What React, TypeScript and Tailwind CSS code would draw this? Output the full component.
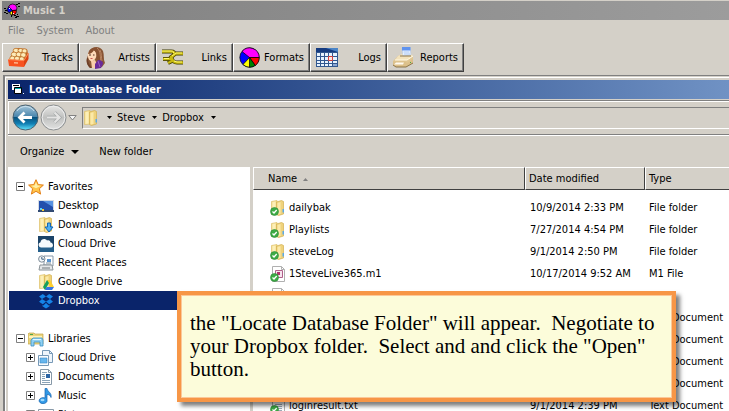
import type { ReactNode } from 'react';

type IconProps = { className?: string };

const AppIcon = () => (
  <svg width="16" height="16" viewBox="0 0 16 16" aria-hidden="true">
    <path d="M8.500 7.500L4.500 4 6 1.800 8.500 1l3 .8 1.500 3-.5 2.200z" fill="#f0f" stroke="#000" strokeWidth=".7" />
    <path d="M8.500 7.500L4.500 4 3.200 6.500l.8 2.500 2 .5z" fill="#00f" stroke="#000" strokeWidth=".7" />
    <path d="M8.500 7.500L6 9.500l.5 2 2.300.5z" fill="#ff0" stroke="#000" strokeWidth=".7" />
    <path d="M8.500 7.500h4l-.5 2.500-1.500 1.500-2 .5z" fill="red" stroke="#000" strokeWidth=".7" />
    <path d="M0 5h2v1H0zM1 7h2v1H1zM0 9h2v1H0zM2 10h2v1H2zM12 1h2v1h-2zM14 0h2v1h-2zM14 3h2v1h-2zM10 12h2v1h-2zM12 13h3v1h-3zM11 14h2v1h-2zM7 12h1v2H7zM13 11h1v1h-1z" fill="#000" />
    <path d="M5 5h1v1H5zM9 10h1v1H9z" fill="#fff" />
  </svg>
);

const TracksIcon = () => (
  <svg width="21" height="21" viewBox="0 0 21 21" aria-hidden="true">
    <path d="M1 13L6 2l4-1 9 1 1 5-4 12z" fill="#c26422" />
    <g fill="#fdebb9" stroke="#b8691d" strokeWidth=".7">
      <ellipse cx="8" cy="3.500" rx="2.800" ry="2.200" />
      <ellipse cx="12.500" cy="3.500" rx="2.500" ry="2" />
      <ellipse cx="16.500" cy="4" rx="2.500" ry="2.200" />
      <ellipse cx="6" cy="7.500" rx="2.800" ry="2.400" />
      <ellipse cx="10.700" cy="7.500" rx="2.600" ry="2.400" />
      <ellipse cx="15.300" cy="8" rx="2.700" ry="2.400" />
      <ellipse cx="4.300" cy="11.300" rx="2.500" ry="2.200" />
      <ellipse cx="9" cy="11.500" rx="2.600" ry="2.300" />
      <ellipse cx="13.700" cy="12" rx="2.500" ry="2.200" />
    </g>
    <path d="M0 12.500l16 1V20L1 19z" fill="#f8521f" />
    <path d="M16 13.500L20.500 6v6L16 20z" fill="#dd4311" />
    <path d="M6 15l4 .3v1.500l-4-.3z" fill="#ffb48a" />
    <path d="M0 12.500l16 1L20.500 6" stroke="#ff8c58" fill="none" />
  </svg>
);

const ArtistsIcon = () => (
  <svg width="21" height="23" viewBox="0 0 21 23" aria-hidden="true">
    <path d="M4 6C6 0 15-1 18 5c1.500 4 0 8 2 12l-3 4-12 1c-3-3-4-7-3-10z" fill="#8a5837" />
    <path d="M3 7c1-3 6-4 8-1 1.500 4-1 9-4 9.500C4 15 2 11 3 7z" fill="#fdd9b8" />
    <path d="M2 12c-1 4 0 7 3 10h2c-3-3-4-6-4-10z" fill="#6e4027" />
    <path d="M3 8c3 0 5-2 6-4 3 3 3 7 3 11l5 3c2-4 1-9 0-12-3-6-11-5-13-1z" fill="#875131" />
    <path d="M12 2c4 3 3 9 4 14M15 4c2 4 1 7 2 11" stroke="#b98561" fill="none" />
    <path d="M6 15l4-1 2 4-1 4H7z" fill="#f8cdaa" />
    <path d="M10 18l3-4c3 0 5 1 5 4l-2 4-6 1z" fill="#6a2b99" />
    <path d="M13 15l2 6" stroke="#9a5dc0" />
    <path d="M4 9h2M8 9h1.500" stroke="#503020" />
    <path d="M5.500 12.500h2" stroke="#cf5555" />
  </svg>
);

const LinksIcon = () => (
  <svg width="22" height="17" viewBox="0 0 22 17" aria-hidden="true" fill="none">
    <path d="M0 2.500h9c3 0 4 1 3 3L8 10H1M21 4.500h-7L9 8c1 3 3 5.500 6 5.500h6M6 14l6-3" stroke="#3d3800" strokeWidth="3.800" />
    <path d="M0 2.500h9c3 0 4 1 3 3L8 10H1M21 4.500h-7L9 8c1 3 3 5.500 6 5.500h6M6 14l6-3" stroke="#c9bb10" strokeWidth="2.400" />
    <path d="M0 2h9c2 0 3 .5 2.500 2M2 9.500h5M20 4h-6L10 7M12 12l3 1h5" stroke="#fff873" strokeWidth="1" />
  </svg>
);

const FormatsIcon = () => (
  <svg width="21" height="21" viewBox="0 0 21 21" aria-hidden="true" stroke="#000" strokeWidth=".7">
    <circle cx="10.500" cy="10.500" r="9.700" fill="#00f" />
    <path d="M10.500 10.500L3 4.500A9.700 9.700 0 0 1 20.200 10.500z" fill="#f0f" />
    <path d="M10.500 10.500h9.700a9.700 9.700 0 0 1-4 8z" fill="red" />
    <path d="M10.500 10.500l5.700 8a9.700 9.700 0 0 1-5.700 1.700z" fill="#008000" />
    <path d="M10.500 10.500v9.700a9.700 9.700 0 0 1-6.500-2.700z" fill="#ff0" />
  </svg>
);

const LogsIcon = () => (
  <svg width="22" height="19" viewBox="0 0 22 19" aria-hidden="true">
    <path d="M0 0h22v19H0z" fill="#31578f" />
    <path d="M0 0h22v4H0z" fill="#153b80" />
    <path d="M10 0h12v4z" fill="#4c85c7" />
    <path
      d="M1 5h3v3H1zM5 5h3v3H5zM9 5h3v3H9zM13 5h3v3h-3zM17 5h4v3h-4zM1 9h3v3H1zM5 9h3v3H5zM9 9h3v3H9zM13 9h3v3h-3zM17 9h4v3h-4zM1 13h3v2H1zM5 13h3v2H5zM9 13h3v2H9zM13 13h3v2h-3zM17 13h4v2h-4zM1 16h3v2H1zM5 16h3v2H5zM9 16h3v2H9zM13 16h3v2h-3z"
      fill="#e8f3ff"
    />
    <path d="M17 16h4v2h-4z" fill="#8ea8d2" />
    <path d="M12.500 8.500h4v4h-4z" fill="#ffe6e1" stroke="#d6403a" />
  </svg>
);

const ReportsIcon = () => (
  <svg width="21" height="21" viewBox="0 0 21 21" aria-hidden="true">
    <path d="M5 9l4-2h9l2 3v6l-7 4H3l-3-3v-3z" fill="#e0c692" />
    <path d="M5 9l4-2h9l2 2-6 4H2z" fill="#f3e2bb" />
    <path d="M9 1h8l1 7-8 1z" fill="#f0f6ff" stroke="#b2c6e4" strokeWidth=".6" />
    <path d="M9 0h8.500v3.500H9z" fill="#5f93ef" />
    <path d="M10.500 5h6M11 7h6" stroke="#a5c3f2" />
    <path d="M7 9h11" stroke="#8f7748" />
    <path d="M2 13h12l6-4" stroke="#fff8e3" fill="none" />
    <path d="M0 14.500h12l2 1.500 6-4v4l-7 4H3l-3-2z" fill="#dcc08a" />
    <path d="M3 15.500h8l-1 2H1z" fill="#fffaf0" />
    <path d="M0 18l3 2h10l7-4" stroke="#8c7549" fill="none" />
    <path d="M17 15h1v1h-1z" fill="#4aa54a" />
  </svg>
);

const WindowIcon = () => (
  <svg width="13" height="11" viewBox="0 0 13 11" aria-hidden="true">
    <path d="M0 0h8v6H0z" fill="#fff" />
    <path d="M1 1h6v1H1z" fill="#000" />
    <path d="M2.500 3.500h7v6h-7z" fill="#fff" stroke="#000" />
    <path d="M3 4h6v1H3z" fill="#0aa" />
    <path d="M11 9h1v1h-1z" fill="#fff" />
  </svg>
);

const BackIcon = () => (
  <svg width="27" height="27" viewBox="0 0 27 27" aria-hidden="true">
    <defs>
      <linearGradient id="back" x1="0" y1="0" x2="0" y2="1">
        <stop offset="0" stopColor="#a7c8dc" />
        <stop offset=".46" stopColor="#4a86ad" />
        <stop offset=".5" stopColor="#09537f" />
        <stop offset=".75" stopColor="#1180b4" />
        <stop offset="1" stopColor="#65e6ff" />
      </linearGradient>
    </defs>
    <circle cx="13.500" cy="13.500" r="12.500" fill="url(#back)" stroke="#49606f" />
    <path d="M5 7c4-6 13-6 17 0" stroke="#e1eef5" fill="none" opacity=".7" />
    <path d="M20 13.500H8.500M12.500 8.500l-5 5 5 5" stroke="#fff" strokeWidth="2.800" fill="none" />
  </svg>
);

const ForwardIcon = () => (
  <svg width="27" height="27" viewBox="0 0 27 27" aria-hidden="true">
    <defs>
      <linearGradient id="forward" x1="0" y1="0" x2="0" y2="1">
        <stop offset="0" stopColor="#e7e7e5" />
        <stop offset=".5" stopColor="#c0c1c0" />
        <stop offset="1" stopColor="#e2e3e2" />
      </linearGradient>
    </defs>
    <circle cx="13.500" cy="13.500" r="12.500" fill="url(#forward)" stroke="#8b8f91" />
    <circle cx="13.500" cy="13.500" r="11.300" fill="none" stroke="#eee" />
    <path d="M7 13.500h11.500M14.500 8.500l5 5-5 5" stroke="#a5a8a8" strokeWidth="3.600" fill="none" />
    <path d="M7 13.500h11.500M14.500 8.500l5 5-5 5" stroke="#e4e4e3" strokeWidth="2.200" fill="none" />
  </svg>
);

const Arrow = ({ className }: IconProps) => (
  <svg width="5" height="3" viewBox="0 0 5 3" className={className} aria-hidden="true">
    <path d="M0 0h5L2.500 3z" fill="#000" />
  </svg>
);

const FolderShape = () => (
  <>
    <path d="M1.500 1.500L7 .5v13.500l-5.500.5z" fill="#f6df92" stroke="#dcc06a" strokeWidth=".7" />
    <path d="M6.500 2l5-1.500 2 1v12.500l-5 1.500-2-1z" fill="#efd27c" stroke="#d3b04f" strokeWidth=".7" />
    <path d="M2.500 2l3-.5v12l-3 .5z" fill="#fcefb8" />
    <path d="M7.500 3l3-1v12l-3 .5z" fill="#fbe9a8" />
    <path d="M12.500 9h1.500v3.500h-1.500z" fill="#5aa9e6" />
  </>
);

const Icon16 = ({ children }: { children: ReactNode }) => (
  <svg width="16" height="16" viewBox="0 0 16 16" className="shrink-0" aria-hidden="true">
    {children}
  </svg>
);

const FolderIcon = () => (
  <Icon16>
    <FolderShape />
  </Icon16>
);

const StarIcon = () => (
  <Icon16>
    <path d="M8 .7l2.200 4.900 5.200.5-4 3.600 1.200 5.400L8 12.300l-4.600 2.800 1.200-5.400-4-3.600 5.200-.5z" fill="#ffc54a" stroke="#e37f18" />
    <path d="M8 3l1.400 3.500 3.600.2-5 2.500-5-2.500 3.500-.2z" fill="#fff0a8" />
  </Icon16>
);

const DesktopIcon = () => (
  <Icon16>
    <path d="M0 2h16v12H0z" fill="#d5dce5" />
    <path d="M1 3h14v9H1z" fill="#234fac" />
    <path d="M5 3h10v6z" fill="#5792e1" />
    <path d="M0 12h16v2H0z" fill="#324b73" />
    <path d="M2 10h2v2H2z" fill="#59d0ff" />
    <path d="M4 11h2v2H4z" fill="#f6ca36" />
  </Icon16>
);

const DownloadsIcon = () => (
  <Icon16>
    <FolderShape />
    <path d="M9.500 6h3v4H15l-4 5-4-5h2.500z" fill="#4eb0f4" stroke="#1565b1" />
  </Icon16>
);

const CloudIcon = () => (
  <Icon16>
    <path d="M0 0h16v16H0z" fill="#1b4469" />
    <path d="M0 11h16v5H0z" fill="#255f8b" />
    <path d="M3 11.500a2.700 2.700 0 0 1-.5-5.300C3 2.500 7.500 2 9 4.500c2-1 3.500.5 3.500 2 3 .2 3.500 5 .5 5z" fill="#f4f9fc" />
  </Icon16>
);

const RecentIcon = () => (
  <Icon16>
    <path d="M6 1h9v10H6z" fill="#fff" stroke="#8799aa" />
    <path d="M9 4h4v3H9z" fill="#5793ce" />
    <path d="M8 8h5M5 10h8" stroke="#778b9c" />
    <path d="M2 10h12l1 5H1z" fill="#e4e7e9" stroke="#8c9499" />
    <path d="M4 13h8" stroke="#70787e" />
    <circle cx="3.800" cy="4" r="3.200" fill="#f3f7fa" stroke="#7d8b97" />
    <path d="M3.800 2v2.200H6" stroke="#3d6180" fill="none" />
  </Icon16>
);

const GoogleDriveIcon = () => (
  <Icon16>
    <FolderShape />
    <path d="M9 6h3l4 7h-4z" fill="#ffcf2e" />
    <path d="M9 6l-4 7 2 3 4-7z" fill="#17a05d" />
    <path d="M8.500 13H16l-2 3H7z" fill="#3676e8" />
  </Icon16>
);

const DropboxIcon = () => (
  <Icon16>
    <path
      d="M4.800 1L8 3.600 4 6.100 1 3.600zM11.200 1L8 3.600l4 2.500 3-2.500zM4 6.100L8 8.600 4.800 11.200 1 8.700zM12 6.100L8 8.600l3.200 2.600L15 8.700zM4.500 12l.8.500L8 10l2.700 2.500.8-.5v1.200L8 15.500l-3.500-2.300z"
      fill="#1584e8"
    />
  </Icon16>
);

const LibrariesIcon = () => (
  <Icon16>
    <path d="M0 3l1-1h5l1 1h8v10H0z" fill="#ecd47c" stroke="#c0a44a" strokeWidth=".7" />
    <path d="M1 5h13v2H1z" fill="#fff3ba" />
    <path d="M2 3h3v1H2z" fill="#4ba54e" />
    <path d="M3 15V9l2-2h9l1 2v6h-3v-4H6v4z" fill="#8fd0f2" stroke="#3d91c2" strokeWidth=".8" />
    <path d="M5 8h8v1H5z" fill="#e1f6ff" />
  </Icon16>
);

const CloudLibraryIcon = () => (
  <Icon16>
    <path d="M4.500.5h7l3 3v9h-10z" fill="#eef5fb" stroke="#7799b7" />
    <path d="M11.500.5v3h3" fill="none" stroke="#7799b7" />
    <path d="M.5 5.500h10v10H.5z" fill="#f8fcff" stroke="#7799b7" />
    <path d="M2 8h7v5H2z" fill="#67b7ee" stroke="#3a88c4" strokeWidth=".6" />
  </Icon16>
);

const DocumentsIcon = () => (
  <Icon16>
    <path d="M2.500.5h8l3 3v12h-11z" fill="#fff" stroke="#8799a8" />
    <path d="M10.500.5v3h3" fill="none" stroke="#8799a8" />
    <path d="M4 3.500h5M4 5.500h3M4 7.500h3M4 9.500h3M4 11.500h8M4 13.500h8" stroke="#8aa3b7" />
    <path d="M8 5h4v4H8z" fill="#2d65a4" />
  </Icon16>
);

const MusicIcon = () => (
  <Icon16>
    <path d="M7 .5h2c.5 3.500 5 4 4 9-.5-2-2-3-4-3V12a4 3 0 1 1-2-2z" fill="#3199e6" stroke="#1763ae" strokeWidth=".7" />
    <ellipse cx="4.500" cy="12" rx="2" ry="1.200" fill="#9edafc" />
  </Icon16>
);

const PicturesIcon = () => (
  <Icon16>
    <path d="M.5 2.500h15v11H.5z" fill="#fff" stroke="#8799a8" />
    <path d="M2 4h12v8H2z" fill="#68b5e8" />
  </Icon16>
);

const SyncedBadge = () => (
  <>
    <circle cx="4.500" cy="11.500" r="4" fill="#3dab45" stroke="#2b8a38" strokeWidth=".6" />
    <path d="M2.500 11.500L4 13l2.700-3" stroke="#fff" strokeWidth="1.300" fill="none" />
  </>
);

const SyncedFolderIcon = () => (
  <Icon16>
    <FolderShape />
    <SyncedBadge />
  </Icon16>
);

const SyncedFileIcon = ({ accent }: { accent?: boolean }) => (
  <Icon16>
    <path d="M2.500.5h9l3 3v12h-12z" fill="#fff" stroke="#b0b0b0" />
    <path d="M11.500.5v3h3" fill="none" stroke="#b0b0b0" />
    {accent ? (
      <>
        <path d="M5.500 4.500h7v7h-7z" fill="#f7e4ee" stroke="#b0608a" />
        <path d="M7 6h3v3H7z" fill="#b0336d" />
      </>
    ) : (
      <path d="M5 6.500h7M5 8.500h7M5 10.500h7M5 12.500h7" stroke="#9dabb8" />
    )}
    <SyncedBadge />
  </Icon16>
);

const tools = [
  { label: 'Tracks', icon: <TracksIcon /> },
  { label: 'Artists', icon: <ArtistsIcon /> },
  { label: 'Links', icon: <LinksIcon /> },
  { label: 'Formats', icon: <FormatsIcon /> },
  { label: 'Logs', icon: <LogsIcon /> },
  { label: 'Reports', icon: <ReportsIcon /> },
];

const favorites = [
  { label: 'Desktop', icon: <DesktopIcon /> },
  { label: 'Downloads', icon: <DownloadsIcon /> },
  { label: 'Cloud Drive', icon: <CloudIcon /> },
  { label: 'Recent Places', icon: <RecentIcon /> },
  { label: 'Google Drive', icon: <GoogleDriveIcon /> },
  { label: 'Dropbox', icon: <DropboxIcon />, selected: true },
];

const libraries = [
  { label: 'Cloud Drive', icon: <CloudLibraryIcon /> },
  { label: 'Documents', icon: <DocumentsIcon /> },
  { label: 'Music', icon: <MusicIcon /> },
  { label: 'Pictures', icon: <PicturesIcon /> },
];

const files = [
  { name: 'dailybak', date: '10/9/2014 2:33 PM', type: 'File folder' },
  { name: 'Playlists', date: '7/27/2014 4:54 PM', type: 'File folder' },
  { name: 'steveLog', date: '9/1/2014 2:50 PM', type: 'File folder' },
  { name: '1SteveLive365.m1', date: '10/17/2014 9:52 AM', type: 'M1 File' },
  { name: 'ErrorLSend', date: '9/1/2014 2:51 PM', type: 'File' },
  { name: '', date: '', type: 'Text Document' },
  { name: '', date: '', type: 'Text Document' },
  { name: '', date: '', type: 'Text Document' },
  { name: '', date: '', type: 'Text Document' },
  { name: 'loginresult.txt', date: '9/1/2014 2:39 PM', type: 'Text Document' },
];

const Expander = ({ open }: { open?: boolean }) => (
  <button type="button" aria-label={open ? 'Collapse' : 'Expand'} className="shrink-0">
    <svg width="9" height="9" viewBox="0 0 9 9" className="block">
      <path d="M.5.5h8v8h-8z" fill="#fff" stroke="#808080" />
      <path d={open ? 'M2 4.500h5' : 'M2 4.500h5M4.500 2v5'} stroke="#000" />
    </svg>
  </button>
);

const FileIcon = ({ type }: { type: string }) => {
  if (type === 'File folder') return <SyncedFolderIcon />;
  return <SyncedFileIcon accent={type === 'M1 File'} />;
};

const NavPane = () => (
  <nav className="w-[242px] shrink-0 bg-white pt-[10px] pl-px">
    <div className="flex h-[19px] items-center gap-[3px] pl-[7px]">
      <Expander open />
      <StarIcon />
      <span className="pl-px">Favorites</span>
    </div>
    <ul className="mb-[19px]">
      {favorites.map(({ label, icon, selected }) => (
        <li key={label}>
          <a
            href="#"
            className={`flex h-[19px] items-center gap-1 pl-[29px] ${selected ? 'bg-[#0a246a] text-white' : ''}`}
          >
            {icon}
            {label}
          </a>
        </li>
      ))}
    </ul>
    <div className="flex h-[19px] items-center gap-[3px] pl-[7px]">
      <Expander open />
      <LibrariesIcon />
      <span className="pl-px">Libraries</span>
    </div>
    <ul>
      {libraries.map(({ label, icon }) => (
        <li key={label} className="flex h-[19px] items-center gap-[3px] pl-[17px]">
          <Expander />
          <a href="#" className="flex items-center gap-1">
            {icon}
            {label}
          </a>
        </li>
      ))}
    </ul>
  </nav>
);

const FileList = () => (
  <div className="min-w-0 flex-1 bg-white">
    <table className="w-full table-fixed border-separate border-spacing-0 text-left whitespace-nowrap">
      <colgroup>
        <col className="w-[272px]" />
        <col className="w-[120px]" />
        <col />
      </colgroup>
      <thead className="bg-[#d4d0c8]">
        <tr className="h-[23px]">
          <th className="border-t border-r border-b border-l border-t-white border-r-[#404040] border-b-[#404040] border-l-white p-0 pt-px pl-[14px] font-normal">
            <span className="flex items-center gap-[6px]">
              Name
              <svg width="5" height="3" viewBox="0 0 5 3" aria-hidden="true">
                <path d="M0 3h5L2.500 0z" fill="#808080" />
              </svg>
            </span>
          </th>
          <th className="border-t border-r border-b border-l border-t-white border-r-[#404040] border-b-[#404040] border-l-white p-0 pt-px pl-[3px] font-normal">
            Date modified
          </th>
          <th className="border-t border-b border-l border-t-white border-b-[#404040] border-l-white p-0 pt-px pl-[3px] font-normal">
            Type
          </th>
        </tr>
      </thead>
      <tbody>
        <tr className="h-[7px]">
          <td colSpan={3} className="p-0" />
        </tr>
        {files.map(({ name, date, type }, index) => (
          <tr key={index} className="h-[22px]">
            <td className="p-0 pl-[17px]">
              <span className="flex items-center gap-[3px]">
                <FileIcon type={type} />
                {name}
              </span>
            </td>
            <td className="p-0 pl-[5px]">{date}</td>
            <td className="p-0 pl-1">{type}</td>
          </tr>
        ))}
      </tbody>
    </table>
  </div>
);

const FolderDialog = () => (
  <section className="ml-[3px] flex min-h-0 flex-1 flex-col border-t border-l-2 border-[#808080]">
    <div className="mt-px flex min-h-0 flex-1 flex-col border-t border-l border-white pt-[2px] pl-[2px]">
      <h2 className="flex h-[19px] shrink-0 items-center gap-1 bg-linear-to-r from-[#0a246a] to-[#7092c4] pl-1 font-bold text-white">
        <WindowIcon />
        Locate Database Folder
      </h2>
      <div className="mt-px flex h-[35px] shrink-0 items-center border-t border-b border-[#808080] shadow-[inset_1px_1px_#fff]">
        <button type="button" aria-label="Back" className="ml-1">
          <BackIcon />
        </button>
        <button type="button" aria-label="Forward" className="ml-px">
          <ForwardIcon />
        </button>
        <button type="button" aria-label="Recent locations" className="ml-px">
          <svg width="9" height="6" viewBox="0 0 9 6">
            <path d="M.8.500h7.400L4.500 5z" fill="#f5f5f5" stroke="#777" strokeWidth=".9" />
          </svg>
        </button>
        <div className="ml-[5px] flex h-[22px] flex-1 items-center border-t border-b border-l border-t-[#808080] border-b-white border-l-[#808080]">
          <FolderIcon />
          <Arrow className="ml-2" />
          <button type="button" className="ml-[5px]">
            Steve
          </button>
          <Arrow className="ml-[7px]" />
          <button type="button" className="ml-[5px]">
            Dropbox
          </button>
          <Arrow className="ml-[7px]" />
        </div>
      </div>
      <div className="flex h-8 shrink-0 items-center border-t border-white pl-3">
        <button type="button" className="flex items-center gap-[7px]">
          Organize
          <svg width="8" height="4" viewBox="0 0 8 4" aria-hidden="true">
            <path d="M0 0h8L4 4z" fill="#000" />
          </svg>
        </button>
        <button type="button" className="ml-5">
          New folder
        </button>
      </div>
      <div className="flex min-h-0 flex-1 gap-[3px] overflow-hidden">
        <NavPane />
        <FileList />
      </div>
    </div>
  </section>
);

const App = () => {
  return (
    <main className="relative flex h-screen flex-col overflow-hidden bg-[#d4d0c8] pt-px font-['DejaVu_Sans_Condensed','DejaVu_Sans',sans-serif] text-[11px] leading-[14px] text-black">
      <h1 className="ml-[2px] flex h-[19px] shrink-0 items-center gap-[3px] bg-linear-to-r from-[#808080] to-[#9c9c9c] pl-[2px] font-bold text-[#d4d0c8]">
        <AppIcon />
        Music 1
      </h1>
      <div className="mb-[2px] flex h-[21px] shrink-0 items-center gap-3 pl-2 text-[#808080]">
        <button type="button">File</button>
        <button type="button">System</button>
        <button type="button">About</button>
      </div>
      <div className="mb-[3px] ml-[2px] flex shrink-0">
        {tools.map(({ label, icon }) => (
          <button
            key={label}
            type="button"
            className="flex h-[29px] w-[77px] items-center justify-between border border-t-white border-r-[#404040] border-b-[#404040] border-l-white pr-[5px] pl-[5px] shadow-[inset_-1px_-1px_#808080]"
          >
            {icon}
            {label}
          </button>
        ))}
      </div>

      <FolderDialog />

      <aside className="absolute top-[291px] right-[53px] left-[177px] border-4 border-[#f79646] bg-[#fcfcda] px-[9px] py-[17px] font-['Liberation_Serif',serif] text-[21px] leading-[23px] shadow-[4px_4px_4px_#00000080,inset_0_0_0_1px_#fbc898]">
        <p>
          the "Locate Database Folder" will appear.&nbsp; Negotiate to
          <br />
          your Dropbox folder.&nbsp; Select and and click the "Open"
          <br />
          button.
        </p>
      </aside>
    </main>
  );
};

export default App;
